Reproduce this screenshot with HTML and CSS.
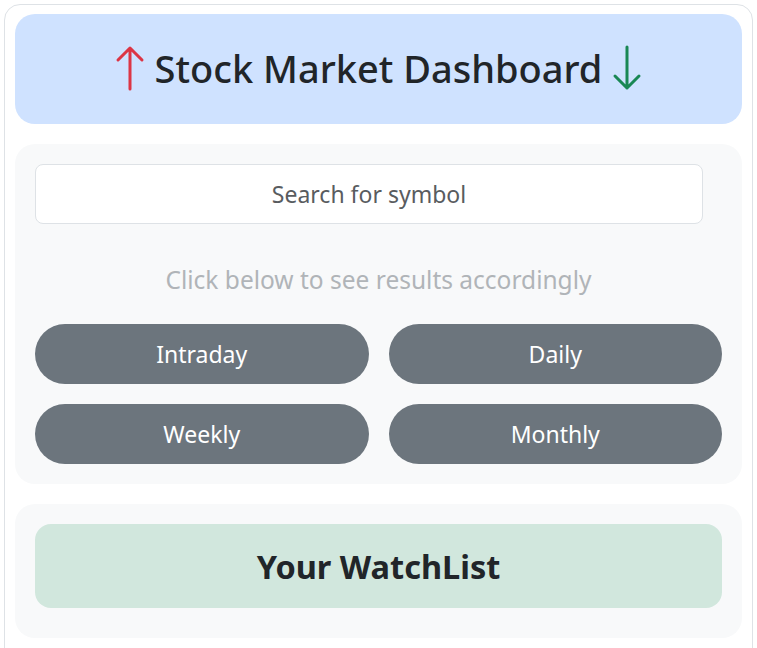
FILE: index.html
```html
<!DOCTYPE html>
<html>
<head>
<meta charset="utf-8">
<link rel="stylesheet" href="styles.css">
</head>
<body>
<div class="shell">
  <header class="hero">
    <h1 class="title">
      <svg class="arrow" viewBox="0 0 30 46" width="30" height="46" aria-hidden="true"><path d="M15 44V3M3 15L15 3L27 15" fill="none" stroke="#dc3545" stroke-width="3" stroke-linecap="round" stroke-linejoin="round"/></svg>
      <span>Stock Market Dashboard</span>
      <svg class="arrow" viewBox="0 0 30 46" width="30" height="46" aria-hidden="true"><path d="M15 2V43M3 31L15 43L27 31" fill="none" stroke="#198754" stroke-width="3" stroke-linecap="round" stroke-linejoin="round"/></svg>
    </h1>
  </header>
  <section class="panel">
    <input class="search" type="text" placeholder="Search for symbol">
    <p class="hint">Click below to see results accordingly</p>
    <div class="grid">
      <button class="btn">Intraday</button>
      <button class="btn">Daily</button>
      <button class="btn">Weekly</button>
      <button class="btn">Monthly</button>
    </div>
  </section>
  <section class="panel panel-last">
    <div class="watch">Your WatchList</div>
  </section>
</div>
</body>
</html>
```
FILE: styles.css
```css
* { box-sizing: border-box; }
html, body { margin: 0; padding: 0; background: #fff; }
body {
  padding: 4px;
  font-family: "Noto Sans", "Open Sans", sans-serif;
  color: #212529;
}
.shell {
  border: 1px solid #dee2e6;
  border-radius: 16px;
  padding: 9px 10px 40px;
  display: flex;
  flex-direction: column;
  gap: 20px;
}
.hero {
  background: #cfe2ff;
  border-radius: 20px;
  height: 110px;
  display: flex;
  align-items: center;
  justify-content: center;
}
.title {
  margin: 0;
  font-size: 38px;
  font-weight: 500;
  line-height: 1.2;
  display: flex;
  align-items: center;
  gap: 10px;
}
.arrow { display: block; flex: none; margin-top: -2px; }
.panel {
  background: #f8f9fa;
  border-radius: 20px;
  padding: 20px;
}
.panel-last { padding-bottom: 30px; }
.search {
  display: block;
  width: 668px;
  height: 60px;
  border: 1px solid #dee2e6;
  border-radius: 8px;
  background: #fff;
  font-family: inherit;
  font-size: 23px;
  text-align: center;
  color: #212529;
  outline: none;
}
.search::placeholder { color: #595c5f; }
.hint {
  margin: 38px 0 26px;
  text-align: center;
  color: #b0b4b8;
  font-size: 24.5px;
  line-height: 36px;
}
.grid {
  display: grid;
  grid-template-columns: 1fr 1fr;
  gap: 20px;
}
.btn {
  height: 60px;
  border: none;
  border-radius: 30px;
  background: #6c757d;
  color: #fff;
  font-family: inherit;
  font-size: 23px;
}
.watch {
  background: #d1e7dd;
  border-radius: 16px;
  height: 84px;
  display: flex;
  align-items: center;
  justify-content: center;
  font-size: 32.5px;
  font-weight: 700;
}
```
